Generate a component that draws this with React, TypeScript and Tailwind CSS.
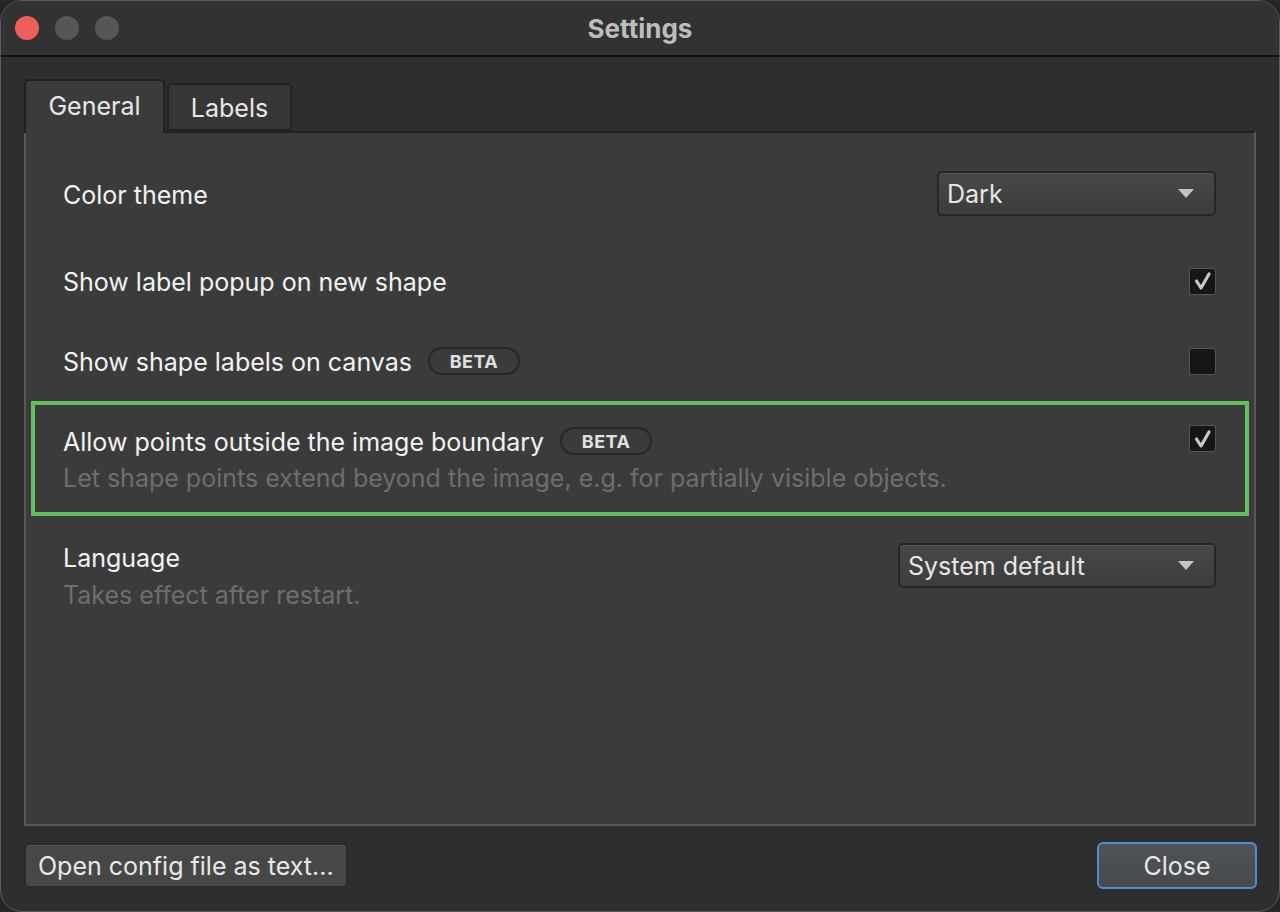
import React, { useState } from 'react';

const font = { fontFamily: 'Inter, "Noto Sans", sans-serif' };

const Checkbox: React.FC<{ checked: boolean; onChange: () => void }> = ({ checked, onChange }) => (
  <button
    onClick={onChange}
    className="w-[27px] h-[27px] rounded-[3px] bg-[#161616] border border-[#565656] flex items-center justify-center"
  >
    {checked && (
      <svg width="20" height="20" viewBox="0 0 20 20">
        <path d="M3.5 10 L8 17 L16 3" fill="none" stroke="#c8c8c8" strokeWidth="3.2" strokeLinecap="round" strokeLinejoin="round" />
      </svg>
    )}
  </button>
);

const Beta = () => (
  <span className="ml-[16px] h-[28px] w-[92px] rounded-full border-2 border-[#262626] text-[#e0e0e0] text-[18px] font-bold tracking-wide flex items-center justify-center">
    BETA
  </span>
);

const Select: React.FC<{ value: string; width: string }> = ({ value, width }) => (
  <div
    className={`${width} h-[45px] rounded-[5px] border-2 border-[#262626] bg-gradient-to-b from-[#474747] to-[#3d3d3d] flex items-center justify-between pl-[8px] pr-[20px] shadow-[inset_0_1px_0_#555]`}
  >
    <span className="text-[25px] text-[#e6e6e6] pt-[3px]">{value}</span>
    <svg width="16" height="9" viewBox="0 0 16 9">
      <path d="M0 0 H16 L8 9 Z" fill="#c4c4c4" />
    </svg>
  </div>
);

export default function App() {
  const [tab, setTab] = useState('general');
  const [popup, setPopup] = useState(true);
  const [canvasLabels, setCanvasLabels] = useState(false);
  const [outside, setOutside] = useState(true);

  return (
    <div className="w-[1280px] h-[912px] bg-[#262626]" style={font}>
      <div className="w-full h-full rounded-[22px] border border-[#5a5a5a] bg-[#2e2e2e] flex flex-col overflow-hidden">
        {/* Title bar */}
        <div className="relative h-[56px] bg-[#323232] border-b-2 border-[#0e0e0e] flex items-center shrink-0">
          <div className="flex items-center gap-[16px] pl-[14px]">
            <span className="w-[24px] h-[24px] rounded-full bg-[#ee5f57]" />
            <span className="w-[24px] h-[24px] rounded-full bg-[#565656]" />
            <span className="w-[24px] h-[24px] rounded-full bg-[#565656]" />
          </div>
          <div className="absolute inset-0 flex items-center justify-center text-[26px] font-bold text-[#bdbdbd] pointer-events-none">
            Settings
          </div>
        </div>

        {/* Body */}
        <div className="flex-1 flex flex-col px-[23px] pt-[22px] pb-[22px]">
          {/* Tabs */}
          <div className="flex items-end h-[54px] relative z-10 -mb-[2px]">
            <button
              onClick={() => setTab('general')}
              className="w-[141px] h-[54px] rounded-t-[5px] border-2 border-b-0 border-[#222] bg-[#3b3b3b] text-[25px] text-[#e8e8e8]"
            >
              General
            </button>
            <button
              onClick={() => setTab('labels')}
              className="ml-[2px] w-[125px] h-[48px] mb-[2px] rounded-t-[5px] border-2 border-[#222] bg-[#363636] text-[25px] text-[#e8e8e8] pt-[4px]"
            >
              Labels
            </button>
          </div>

          {/* Pane */}
          <div className="flex-1 bg-[#3b3b3b] border-2 border-[#595959] border-t-[#222] flex flex-col">
            {tab === 'general' ? (
              <>
                <div className="mt-[38px] pl-[37px] pr-[38px] flex items-center justify-between">
                  <span className="text-[25px] leading-[30px] text-[#f2f2f2] pt-[2px]">Color theme</span>
                  <Select value="Dark" width="w-[279px]" />
                </div>

                <div className="mt-[51px] pl-[37px] pr-[38px] h-[28px] flex items-center justify-between">
                  <span className="text-[25px] leading-[30px] text-[#f2f2f2] pt-[2px]">Show label popup on new shape</span>
                  <Checkbox checked={popup} onChange={() => setPopup(!popup)} />
                </div>

                <div className="mt-[52px] pl-[37px] pr-[38px] h-[28px] flex items-center justify-between">
                  <span className="flex items-center">
                    <span className="text-[25px] leading-[30px] text-[#f2f2f2] pt-[2px]">Show shape labels on canvas</span>
                    <Beta />
                  </span>
                  <Checkbox checked={canvasLabels} onChange={() => setCanvasLabels(!canvasLabels)} />
                </div>

                <div className="mt-[26px] mx-[5px] h-[115px] border-[4px] border-[#62c062] pl-[28px] pr-[29px] flex items-start justify-between">
                  <div className="flex flex-col pt-[21px]">
                    <span className="flex items-center h-[30px]">
                      <span className="text-[25px] leading-[30px] text-[#f2f2f2] pt-[2px]">Allow points outside the image boundary</span>
                      <Beta />
                    </span>
                    <span className="text-[25px] leading-[30px] text-[#6e6e6e] mt-[7px]">
                      Let shape points extend beyond the image, e.g. for partially visible objects.
                    </span>
                  </div>
                  <div className="mt-[20px]">
                    <Checkbox checked={outside} onChange={() => setOutside(!outside)} />
                  </div>
                </div>

                <div className="mt-[22px] pl-[37px] pr-[38px] flex items-start justify-between">
                  <div className="flex flex-col pt-[4px]">
                    <span className="text-[25px] text-[#f2f2f2] leading-[32px]">Language</span>
                    <span className="text-[25px] text-[#6e6e6e] leading-[32px] mt-[5px]">Takes effect after restart.</span>
                  </div>
                  <div className="mt-[5px]">
                    <Select value="System default" width="w-[318px]" />
                  </div>
                </div>
              </>
            ) : (
              <div />
            )}
          </div>

          {/* Footer */}
          <div className="mt-[16px] flex items-center justify-between">
            <button className="h-[45px] px-[12px] pt-[2px] rounded-[5px] border-2 border-[#2a2a2a] bg-[#474747] text-[25px] text-[#e8e8e8] shadow-[inset_0_1px_0_#575757]">
              Open config file as text...
            </button>
            <button className="w-[160px] h-[47px] -mr-[1px] pt-[2px] rounded-[6px] border-2 border-[#4b8ed6] bg-gradient-to-b from-[#4f5257] to-[#464a4f] text-[25px] text-[#e8e8e8]">
              Close
            </button>
          </div>
        </div>
      </div>
    </div>
  );
}
